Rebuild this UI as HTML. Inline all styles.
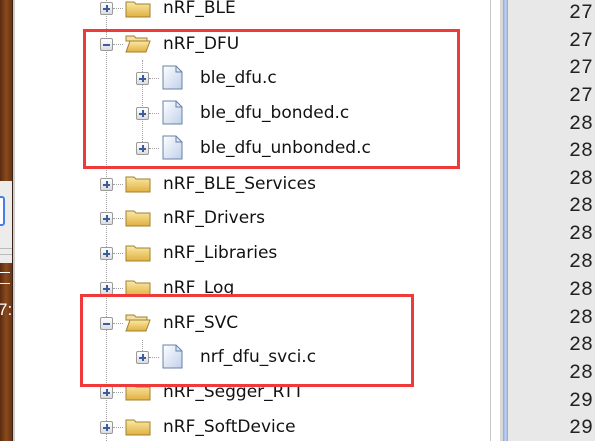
<!DOCTYPE html>
<html><head><style>
*{margin:0;padding:0;box-sizing:border-box}
body{width:595px;height:441px;overflow:hidden;background:#fff;position:relative;font-family:"DejaVu Sans",sans-serif}
.abs{position:absolute}
.t{position:absolute;font-size:17px;color:#111;line-height:20px;white-space:nowrap;font-family:"DejaVu Sans",sans-serif}
.box{position:absolute;width:13px;height:13px;border:1px solid #9a9a9a;border-radius:2px;background:linear-gradient(#fff,#dcdcdc)}
.box:before{content:"";position:absolute;left:2px;top:5px;width:7px;height:2px;background:#3a5ca0}
.box.p:after{content:"";position:absolute;left:5px;top:2px;width:2px;height:7px;background:#3a5ca0}
.vd{position:absolute;width:0;border-left:1px dotted #a0a0a0}
.hd{position:absolute;height:0;border-top:1px dotted #a0a0a0;width:10px}
.fold{position:absolute;width:26px;height:19px}
.file{position:absolute;width:21px;height:25px}
.num{position:absolute;left:569px;font-family:"Liberation Mono",monospace;font-size:20px;color:#222;line-height:20px}
.red{position:absolute;border:3px solid #f03a3a}
</style></head><body>
<div class="abs" style="left:0;top:0;width:12px;height:441px;background:linear-gradient(90deg,#5a2a10,#8a4a1c,#6a3414)"></div>
<div class="abs" style="left:0;top:181px;width:12px;height:82px;background:#ececec"></div>
<div class="abs" style="left:-6px;top:196px;width:11px;height:30px;border:2px solid #4a7fe0;border-radius:3px;background:#fff"></div>
<div class="abs" style="left:0;top:248px;width:12px;height:1px;background:#bbb"></div>
<div class="abs" style="left:0;top:254px;width:12px;height:1px;background:#bbb"></div>
<div class="abs" style="left:0;top:272px;width:10px;height:1px;background:#fff"></div>
<div class="abs" style="left:0;top:283px;width:10px;height:1px;background:#eee"></div>
<div class="abs" style="left:-2px;top:300px;color:#fff;font-size:17px;font-family:'Liberation Sans'">7:</div>
<div class="abs" style="left:12px;top:0;width:1px;height:441px;background:#3a2010"></div>
<div class="abs" style="left:13px;top:0;width:2px;height:441px;background:#cfcfcf"></div>

<div class="abs" style="left:490px;top:0;width:1px;height:441px;background:#c8c8c8"></div>
<div class="abs" style="left:500px;top:0;width:3px;height:441px;background:#d8d8d8"></div>
<div class="abs" style="left:503px;top:0;width:5px;height:441px;background:linear-gradient(90deg,#8aa6d8,#c4d2ee,#8aa6d8)"></div>
<div class="abs" style="left:508px;top:0;width:87px;height:441px;background:#e8e8e8"></div>
<div class="num" style="top:4px">27</div>
<div class="num" style="top:32px">27</div>
<div class="num" style="top:59px">27</div>
<div class="num" style="top:87px">27</div>
<div class="num" style="top:115px">28</div>
<div class="num" style="top:142px">28</div>
<div class="num" style="top:170px">28</div>
<div class="num" style="top:197px">28</div>
<div class="num" style="top:225px">28</div>
<div class="num" style="top:253px">28</div>
<div class="num" style="top:281px">28</div>
<div class="num" style="top:309px">28</div>
<div class="num" style="top:336px">28</div>
<div class="num" style="top:364px">28</div>
<div class="num" style="top:392px">29</div>
<div class="num" style="top:419px">29</div>

<div class="vd" style="left:106px;top:0;height:441px"></div>
<div class="vd" style="left:142px;top:60px;height:88px"></div>
<div class="vd" style="left:142px;top:340px;height:17px"></div>

<svg width="0" height="0" style="position:absolute"><defs>
<linearGradient id="fg" x1="0" y1="0" x2="0" y2="1"><stop offset="0" stop-color="#fbe9a6"/><stop offset="1" stop-color="#e0b040"/></linearGradient>
<linearGradient id="pg" x1="0" y1="0" x2="1" y2="1"><stop offset="0" stop-color="#fff"/><stop offset="1" stop-color="#c0d0ea"/></linearGradient>
</defs></svg>

<div class="hd" style="left:113px;top:8px"></div><div class="box p" style="left:100px;top:2px"></div>
<svg class="fold" style="left:125px;top:-1px" viewBox="0 0 26 19"><path d="M1 3h8l2 2h14v13H1z" fill="url(#fg)" stroke="#a08030"/></svg>
<div class="t" style="left:163px;top:-2px">nRF_BLE</div>

<div class="hd" style="left:113px;top:44px"></div><div class="box" style="left:100px;top:38px"></div>
<svg class="fold" style="left:125px;top:34px" viewBox="0 0 26 19"><path d="M1 2h8l2 2h11v3H1z" fill="#f4e0a0" stroke="#a08030"/><path d="M1 18L5 7h20l-4 11z" fill="url(#fg)" stroke="#a08030"/></svg>
<div class="t" style="left:163px;top:34px">nRF_DFU</div>

<div class="hd" style="left:149px;top:78px"></div><div class="box p" style="left:136px;top:72px"></div>
<svg class="file" style="left:162px;top:65px" viewBox="0 0 21 25"><path d="M1 1h13l6 6v17H1z" fill="url(#pg)" stroke="#6a80a8"/><path d="M14 1v6h6" fill="none" stroke="#6a80a8"/></svg>
<div class="t" style="left:200px;top:68px">ble_dfu.c</div>

<div class="hd" style="left:149px;top:113px"></div><div class="box p" style="left:136px;top:107px"></div>
<svg class="file" style="left:162px;top:100px" viewBox="0 0 21 25"><path d="M1 1h13l6 6v17H1z" fill="url(#pg)" stroke="#6a80a8"/><path d="M14 1v6h6" fill="none" stroke="#6a80a8"/></svg>
<div class="t" style="left:200px;top:103px">ble_dfu_bonded.c</div>

<div class="hd" style="left:149px;top:148px"></div><div class="box p" style="left:136px;top:142px"></div>
<svg class="file" style="left:162px;top:135px" viewBox="0 0 21 25"><path d="M1 1h13l6 6v17H1z" fill="url(#pg)" stroke="#6a80a8"/><path d="M14 1v6h6" fill="none" stroke="#6a80a8"/></svg>
<div class="t" style="left:200px;top:138px">ble_dfu_unbonded.c</div>

<div class="hd" style="left:113px;top:184px"></div><div class="box p" style="left:100px;top:178px"></div>
<svg class="fold" style="left:125px;top:174px" viewBox="0 0 26 19"><path d="M1 3h8l2 2h14v13H1z" fill="url(#fg)" stroke="#a08030"/></svg>
<div class="t" style="left:163px;top:174px">nRF_BLE_Services</div>

<div class="hd" style="left:113px;top:218px"></div><div class="box p" style="left:100px;top:212px"></div>
<svg class="fold" style="left:125px;top:208px" viewBox="0 0 26 19"><path d="M1 3h8l2 2h14v13H1z" fill="url(#fg)" stroke="#a08030"/></svg>
<div class="t" style="left:163px;top:208px">nRF_Drivers</div>

<div class="hd" style="left:113px;top:253px"></div><div class="box p" style="left:100px;top:247px"></div>
<svg class="fold" style="left:125px;top:243px" viewBox="0 0 26 19"><path d="M1 3h8l2 2h14v13H1z" fill="url(#fg)" stroke="#a08030"/></svg>
<div class="t" style="left:163px;top:243px">nRF_Libraries</div>

<div class="hd" style="left:113px;top:288px"></div><div class="box p" style="left:100px;top:282px"></div>
<svg class="fold" style="left:125px;top:278px" viewBox="0 0 26 19"><path d="M1 3h8l2 2h14v13H1z" fill="url(#fg)" stroke="#a08030"/></svg>
<div class="t" style="left:163px;top:278px">nRF_Log</div>

<div class="hd" style="left:113px;top:323px"></div><div class="box" style="left:100px;top:317px"></div>
<svg class="fold" style="left:125px;top:313px" viewBox="0 0 26 19"><path d="M1 2h8l2 2h11v3H1z" fill="#f4e0a0" stroke="#a08030"/><path d="M1 18L5 7h20l-4 11z" fill="url(#fg)" stroke="#a08030"/></svg>
<div class="t" style="left:163px;top:313px">nRF_SVC</div>

<div class="hd" style="left:149px;top:357px"></div><div class="box p" style="left:136px;top:351px"></div>
<svg class="file" style="left:162px;top:344px" viewBox="0 0 21 25"><path d="M1 1h13l6 6v17H1z" fill="url(#pg)" stroke="#6a80a8"/><path d="M14 1v6h6" fill="none" stroke="#6a80a8"/></svg>
<div class="t" style="left:200px;top:347px">nrf_dfu_svci.c</div>

<div class="hd" style="left:113px;top:392px"></div><div class="box p" style="left:100px;top:386px"></div>
<svg class="fold" style="left:125px;top:382px" viewBox="0 0 26 19"><path d="M1 3h8l2 2h14v13H1z" fill="url(#fg)" stroke="#a08030"/></svg>
<div class="t" style="left:163px;top:382px">nRF_Segger_RTT</div>

<div class="hd" style="left:113px;top:427px"></div><div class="box p" style="left:100px;top:421px"></div>
<svg class="fold" style="left:125px;top:417px" viewBox="0 0 26 19"><path d="M1 3h8l2 2h14v13H1z" fill="url(#fg)" stroke="#a08030"/></svg>
<div class="t" style="left:163px;top:417px">nRF_SoftDevice</div>

<div class="red" style="left:83px;top:29px;width:377px;height:140px"></div>
<div class="red" style="left:80px;top:294px;width:334px;height:93px"></div>
</body></html>
